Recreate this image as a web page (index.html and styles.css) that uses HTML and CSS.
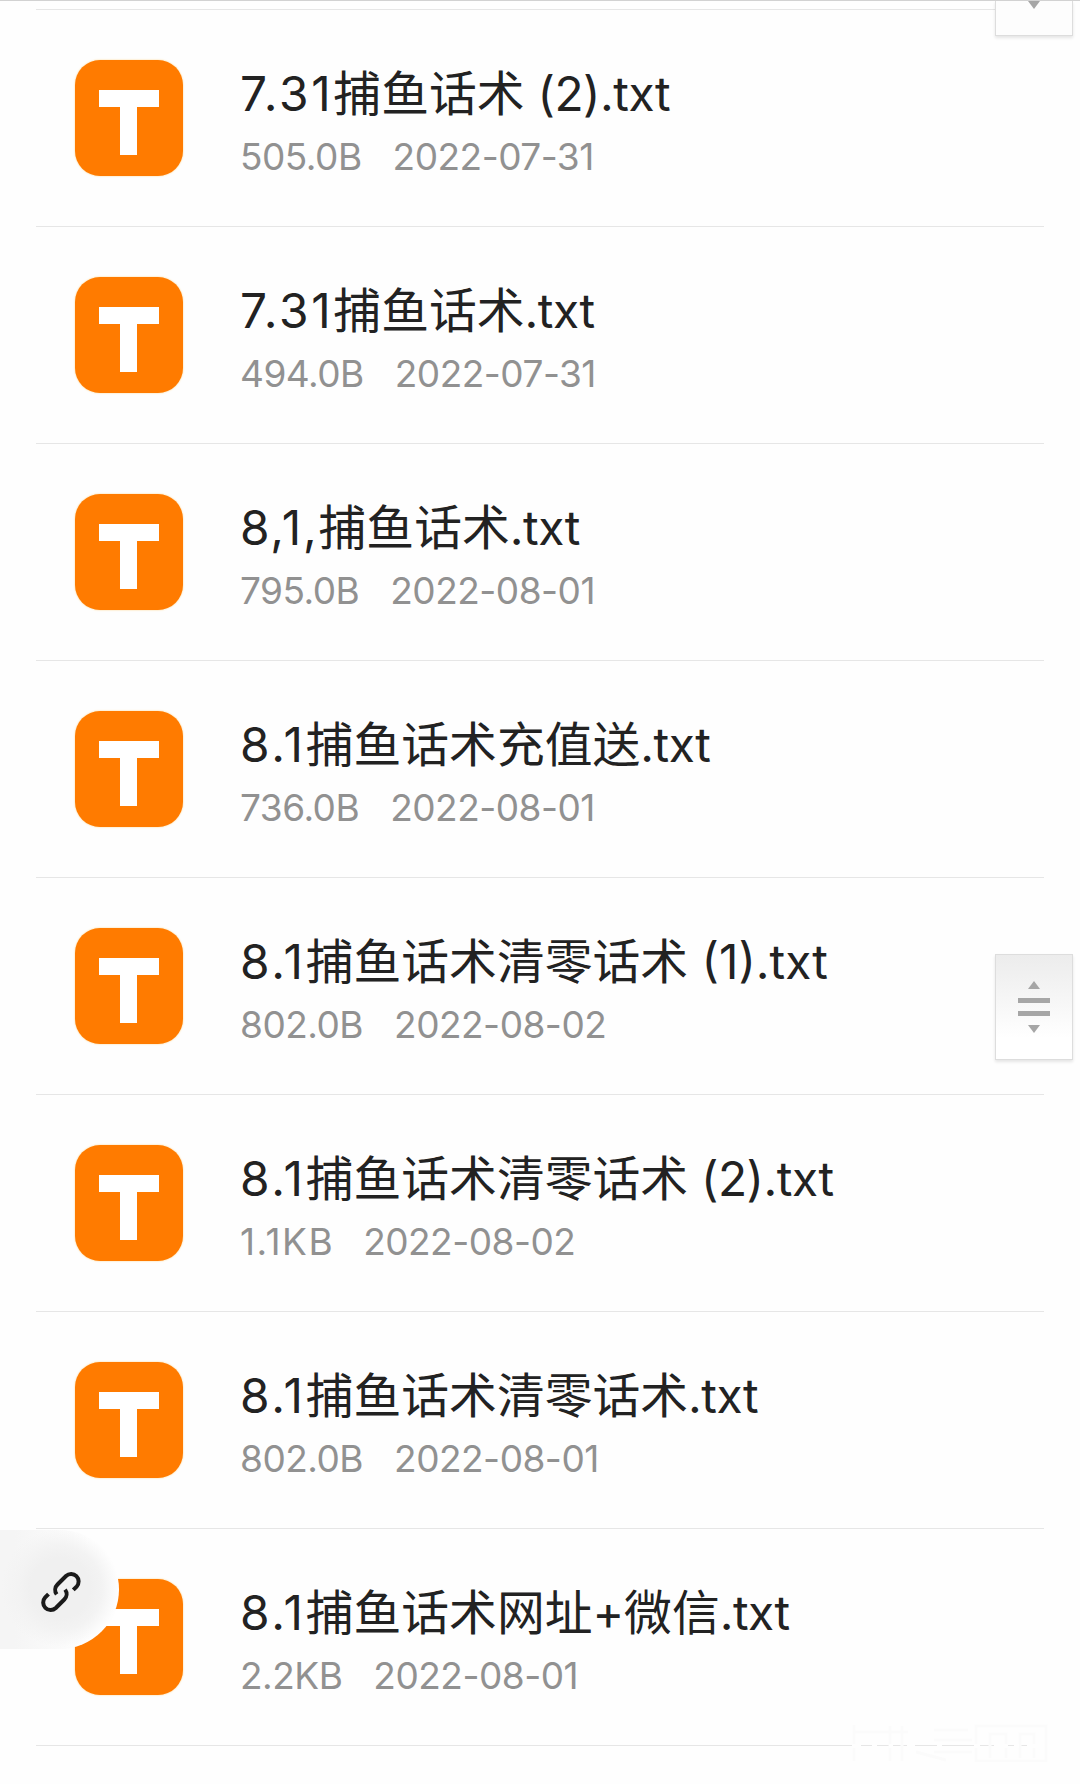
FILE: index.html
```html
<!DOCTYPE html>
<html lang="zh-CN">
<head>
    <meta charset="UTF-8">
    <meta name="viewport" content="width=device-width, initial-scale=1.0">
    <title>文件列表</title>
    <link rel="stylesheet" href="styles.css">
</head>
<body>
    <ul class="file-list">
        <li class="file">
            <div class="file-icon"><svg viewBox="0 0 108 116"><path d="M24 30h60v17H62v48H45V47H24z"/></svg></div>
            <div class="file-info">
                <div class="file-name"><span class="num">7.31</span>捕鱼话术<span class="ext"> (2).txt</span></div>
                <div class="file-meta"><span>505.0B</span><span>2022-07-31</span></div>
            </div>
        </li>
        <li class="file">
            <div class="file-icon"><svg viewBox="0 0 108 116"><path d="M24 30h60v17H62v48H45V47H24z"/></svg></div>
            <div class="file-info">
                <div class="file-name"><span class="num">7.31</span>捕鱼话术<span class="ext">.txt</span></div>
                <div class="file-meta"><span>494.0B</span><span>2022-07-31</span></div>
            </div>
        </li>
        <li class="file">
            <div class="file-icon"><svg viewBox="0 0 108 116"><path d="M24 30h60v17H62v48H45V47H24z"/></svg></div>
            <div class="file-info">
                <div class="file-name"><span class="num comma">8,1,</span>捕鱼话术<span class="ext">.txt</span></div>
                <div class="file-meta"><span>795.0B</span><span>2022-08-01</span></div>
            </div>
        </li>
        <li class="file">
            <div class="file-icon"><svg viewBox="0 0 108 116"><path d="M24 30h60v17H62v48H45V47H24z"/></svg></div>
            <div class="file-info">
                <div class="file-name"><span class="num">8.1</span>捕鱼话术充值送<span class="ext">.txt</span></div>
                <div class="file-meta"><span>736.0B</span><span>2022-08-01</span></div>
            </div>
        </li>
        <li class="file">
            <div class="file-icon"><svg viewBox="0 0 108 116"><path d="M24 30h60v17H62v48H45V47H24z"/></svg></div>
            <div class="file-info">
                <div class="file-name"><span class="num">8.1</span>捕鱼话术清零话术 (1).txt</div>
                <div class="file-meta"><span>802.0B</span><span>2022-08-02</span></div>
            </div>
        </li>
        <li class="file">
            <div class="file-icon"><svg viewBox="0 0 108 116"><path d="M24 30h60v17H62v48H45V47H24z"/></svg></div>
            <div class="file-info">
                <div class="file-name"><span class="num">8.1</span>捕鱼话术清零话术<span class="ext"> (2).txt</span></div>
                <div class="file-meta"><span class="kb">1.1KB</span><span>2022-08-02</span></div>
            </div>
        </li>
        <li class="file">
            <div class="file-icon"><svg viewBox="0 0 108 116"><path d="M24 30h60v17H62v48H45V47H24z"/></svg></div>
            <div class="file-info">
                <div class="file-name"><span class="num">8.1</span>捕鱼话术清零话术<span class="ext">.txt</span></div>
                <div class="file-meta"><span>802.0B</span><span>2022-08-01</span></div>
            </div>
        </li>
        <li class="file">
            <div class="file-icon"><svg viewBox="0 0 108 116"><path d="M24 30h60v17H62v48H45V47H24z"/></svg></div>
            <div class="file-info">
                <div class="file-name"><span class="num">8.1</span>捕鱼话术网址+微信<span class="ext">.txt</span></div>
                <div class="file-meta"><span>2.2KB</span><span>2022-08-01</span></div>
            </div>
        </li>
    </ul>

    <svg class="watermark" viewBox="0 0 200 40">
        <path class="faint" d="M4 3v36M4 10h54M40 4v35M52 4v35M66 30l30 8M84 8h34M84 18h38M84 30h38M126 4h70v35h-70zM140 36V12h16v24M170 36V12h14v24"/>
        <path class="gap" d="M2 24h9M22 24h5M39 24h4M57 24h8M87 24h5M124 24h6M144 24h14M164 24h5M177 24h17"/>
    </svg>

    <div class="handle handle-top">
        <svg viewBox="0 0 78 35"><path d="M33 0h12l-6 8z"/></svg>
    </div>
    <div class="handle handle-scroll">
        <svg viewBox="0 0 78 106"><path d="M33 35l6-8 6 8zM23 44h32v5H23zM23 57h32v5H23zM33 71h12l-6 8z"/></svg>
    </div>

    <button class="link-button">
        <svg viewBox="0 0 44 44" width="44" height="44">
            <path d="M34.3 19.900L37.600 16.600A7.500 7.500 0 0 0 27 6L18.500 14.500A7.500 7.500 0 0 0 17.700 24.400"/>
            <path d="M9.500 24.100L6.200 27.400A7.500 7.500 0 0 0 16.800 38L25.300 29.500A7.500 7.500 0 0 0 26.100 19.600"/>
        </svg>
    </button>
</body>
</html>
```
FILE: styles.css
```css
* {
    box-sizing: border-box;
}

body {
    margin: 0;
    position: relative;
    height: 1784px;
    overflow: hidden;
    background: #fefefe;
    border-top: 1px solid #d2d2d2;
    font-family: Inter, "Noto Sans CJK SC", sans-serif;
}

.file-list {
    list-style: none;
    margin: 8px 36px 0;
    padding: 0;
    border-top: 1px solid #e6e6e6;
}

.file {
    display: flex;
    height: 217px;
    padding: 50px 0 0 39px;
    border-bottom: 1px solid #e6e6e6;
}

.file-icon {
    width: 108px;
    height: 116px;
    border-radius: 25px;
    background: #ff7b00;
    box-shadow: 0 0 2px #ffd080;
}

.file-icon svg {
    display: block;
    fill: #fff;
}

.file-info {
    margin-left: 57px;
    white-space: nowrap;
}

.file-name {
    height: 69px;
    line-height: 68px;
    font-size: 47.8px;
    color: #222;
}

.num {
    letter-spacing: 2.7px;
}

.num.comma {
    letter-spacing: 1.8px;
}

.ext {
    letter-spacing: -0.5px;
}

.file-meta {
    display: flex;
    gap: 31px;
    height: 56px;
    line-height: 56px;
    font-size: 37px;
    letter-spacing: -0.5px;
    color: #919191;
}

.kb {
    letter-spacing: 1.5px;
    margin-right: -2px;
}

.handle {
    position: absolute;
    right: 7px;
    width: 78px;
    background: linear-gradient(#ececec, #fff 80%);
    border: 1px solid #ddd;
    box-shadow: 0 2px 3px rgba(0,0,0,0.1);
}

.handle svg {
    display: block;
    margin: -1px;
    width: 78px;
    fill: #a6a6a6;
}

.handle-top {
    top: 0;
    height: 35px;
    border-top: none;
    background: #fdfdfd;
}

.handle-top svg {
    margin-top: 0;
}

.handle-scroll {
    top: 953px;
    height: 106px;
}

.link-button {
    position: absolute;
    left: 0;
    top: 1529px;
    width: 119px;
    height: 119px;
    padding: 0;
    border: none;
    border-radius: 0 60px 60px 0;
    background: radial-gradient(circle at 60px 58px, #f0f0f0 30px, #f3f3f3 42px, rgba(254,254,254,0) 59px), linear-gradient(90deg, #f5f5f5 15px, #fefefe 90px);
}

.link-button svg {
    position: absolute;
    left: 39px;
    top: 40px;
    fill: none;
    stroke: #1a1a1a;
    stroke-width: 4;
}

.watermark {
    position: absolute;
    left: 850px;
    top: 1721px;
    width: 200px;
    height: 40px;
    fill: none;
}

.watermark .faint {
    stroke: #fbfbfb;
    stroke-width: 3;
}

.watermark .gap {
    stroke: #fefefe;
    stroke-width: 4;
}
```
